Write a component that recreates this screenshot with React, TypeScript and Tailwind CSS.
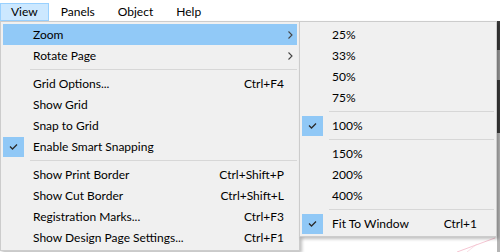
import React from "react";

type MenuRow =
  | { kind: "item"; label: string; shortcut?: string; checked?: boolean; sub?: boolean; active?: boolean }
  | { kind: "sep" };

const viewItems: MenuRow[] = [
  { kind: "item", label: "Zoom", sub: true, active: true },
  { kind: "item", label: "Rotate Page", sub: true },
  { kind: "sep" },
  { kind: "item", label: "Grid Options...", shortcut: "Ctrl+F4" },
  { kind: "item", label: "Show Grid" },
  { kind: "item", label: "Snap to Grid" },
  { kind: "item", label: "Enable Smart Snapping", checked: true },
  { kind: "sep" },
  { kind: "item", label: "Show Print Border", shortcut: "Ctrl+Shift+P" },
  { kind: "item", label: "Show Cut Border", shortcut: "Ctrl+Shift+L" },
  { kind: "item", label: "Registration Marks...", shortcut: "Ctrl+F3" },
  { kind: "item", label: "Show Design Page Settings...", shortcut: "Ctrl+F1" },
];

const zoomItems: MenuRow[] = [
  { kind: "item", label: "25%" },
  { kind: "item", label: "33%" },
  { kind: "item", label: "50%" },
  { kind: "item", label: "75%" },
  { kind: "sep" },
  { kind: "item", label: "100%", checked: true },
  { kind: "sep" },
  { kind: "item", label: "150%" },
  { kind: "item", label: "200%" },
  { kind: "item", label: "400%" },
  { kind: "sep" },
  { kind: "item", label: "Fit To Window", shortcut: "Ctrl+1", checked: true },
];

function CheckBox() {
  return (
    <div className="w-[21px] h-[20px] bg-[#90c8f6] flex items-center justify-center">
      <svg width="21" height="20" viewBox="0 0 21 20">
        <polyline points="7,9.5 9.5,12 14,7.5" fill="none" stroke="#2b2b2b" strokeWidth={1.3} />
      </svg>
    </div>
  );
}

function Chevron() {
  return (
    <svg width="5" height="8" viewBox="0 0 5 8" className="ml-[4px]">
      <polyline points="0.5,0.5 4,4 0.5,7.5" fill="none" stroke="#444" strokeWidth={1.1} />
    </svg>
  );
}

function Menu({ rows, trail }: { rows: MenuRow[]; trail: string }) {
  return (
    <>
      {rows.map((row, i) =>
        row.kind === "sep" ? (
          <div key={i} className="h-[7px] flex items-center pl-[27px]">
            <div className="h-px flex-1 bg-[#d7d7d7]" />
          </div>
        ) : (
          <div
            key={i}
            className={`h-[21px] flex items-center ${row.active ? "bg-[#91c9f7]" : ""}`}
          >
            <div className="w-[30px] h-full flex items-center">{row.checked && <CheckBox />}</div>
            <span className="flex-1 whitespace-nowrap">{row.label}</span>
            {row.shortcut && <span className="whitespace-nowrap">{row.shortcut}</span>}
            <div className={`${trail} flex items-center`}>{row.sub && <Chevron />}</div>
          </div>
        )
      )}
    </>
  );
}

export default function App() {
  return (
    <div className="relative w-[500px] h-[252px] overflow-hidden bg-white text-[12px] text-black font-['Segoe_UI','Lato',sans-serif] flex flex-col">
      <div className="h-[21px] flex items-start pt-[3px] gap-[1px]">
        <div className="h-[18px] px-[10px] flex items-center bg-[#cce8ff] border border-[#99d1ff]">View</div>
        <div className="h-[18px] px-[11px] flex items-center">Panels</div>
        <div className="h-[18px] px-[11px] flex items-center">Object</div>
        <div className="h-[18px] px-[11px] flex items-center">Help</div>
      </div>

      <div className="flex flex-1">
        <div className="flex-1 relative bg-white">
          <svg className="absolute right-0 bottom-0" width="60" height="20" viewBox="0 0 60 20">
            <line x1="20" y1="20" x2="58" y2="6" stroke="#f2b8c8" strokeWidth={0.8} />
            <line x1="30" y1="20" x2="40" y2="12" stroke="#f5c9d5" strokeWidth={0.6} />
          </svg>
        </div>
        <div className="w-[3px] flex flex-col">
          <div className="h-[29px] bg-[#3a3a3a]" />
          <div className="h-[30px] bg-[#9a9a9a]" />
          <div className="h-[53px] bg-[#3a3a3a]" />
          <div className="flex-1 bg-[#b5b5b5]" />
        </div>
      </div>

      <div className="absolute left-0 top-[21px] w-[300px] border border-[#cccccc] bg-[#f0f0f0] p-[2px] shadow-[2px_2px_3px_rgba(0,0,0,0.25)]">
        <Menu rows={viewItems} trail="w-[13px]" />
      </div>

      <div className="absolute left-[299px] top-[21px] w-[198px] border border-[#cccccc] bg-[#f0f0f0] p-[2px] shadow-[2px_2px_3px_rgba(0,0,0,0.25)]">
        <Menu rows={zoomItems} trail="w-[17px]" />
      </div>
    </div>
  );
}
